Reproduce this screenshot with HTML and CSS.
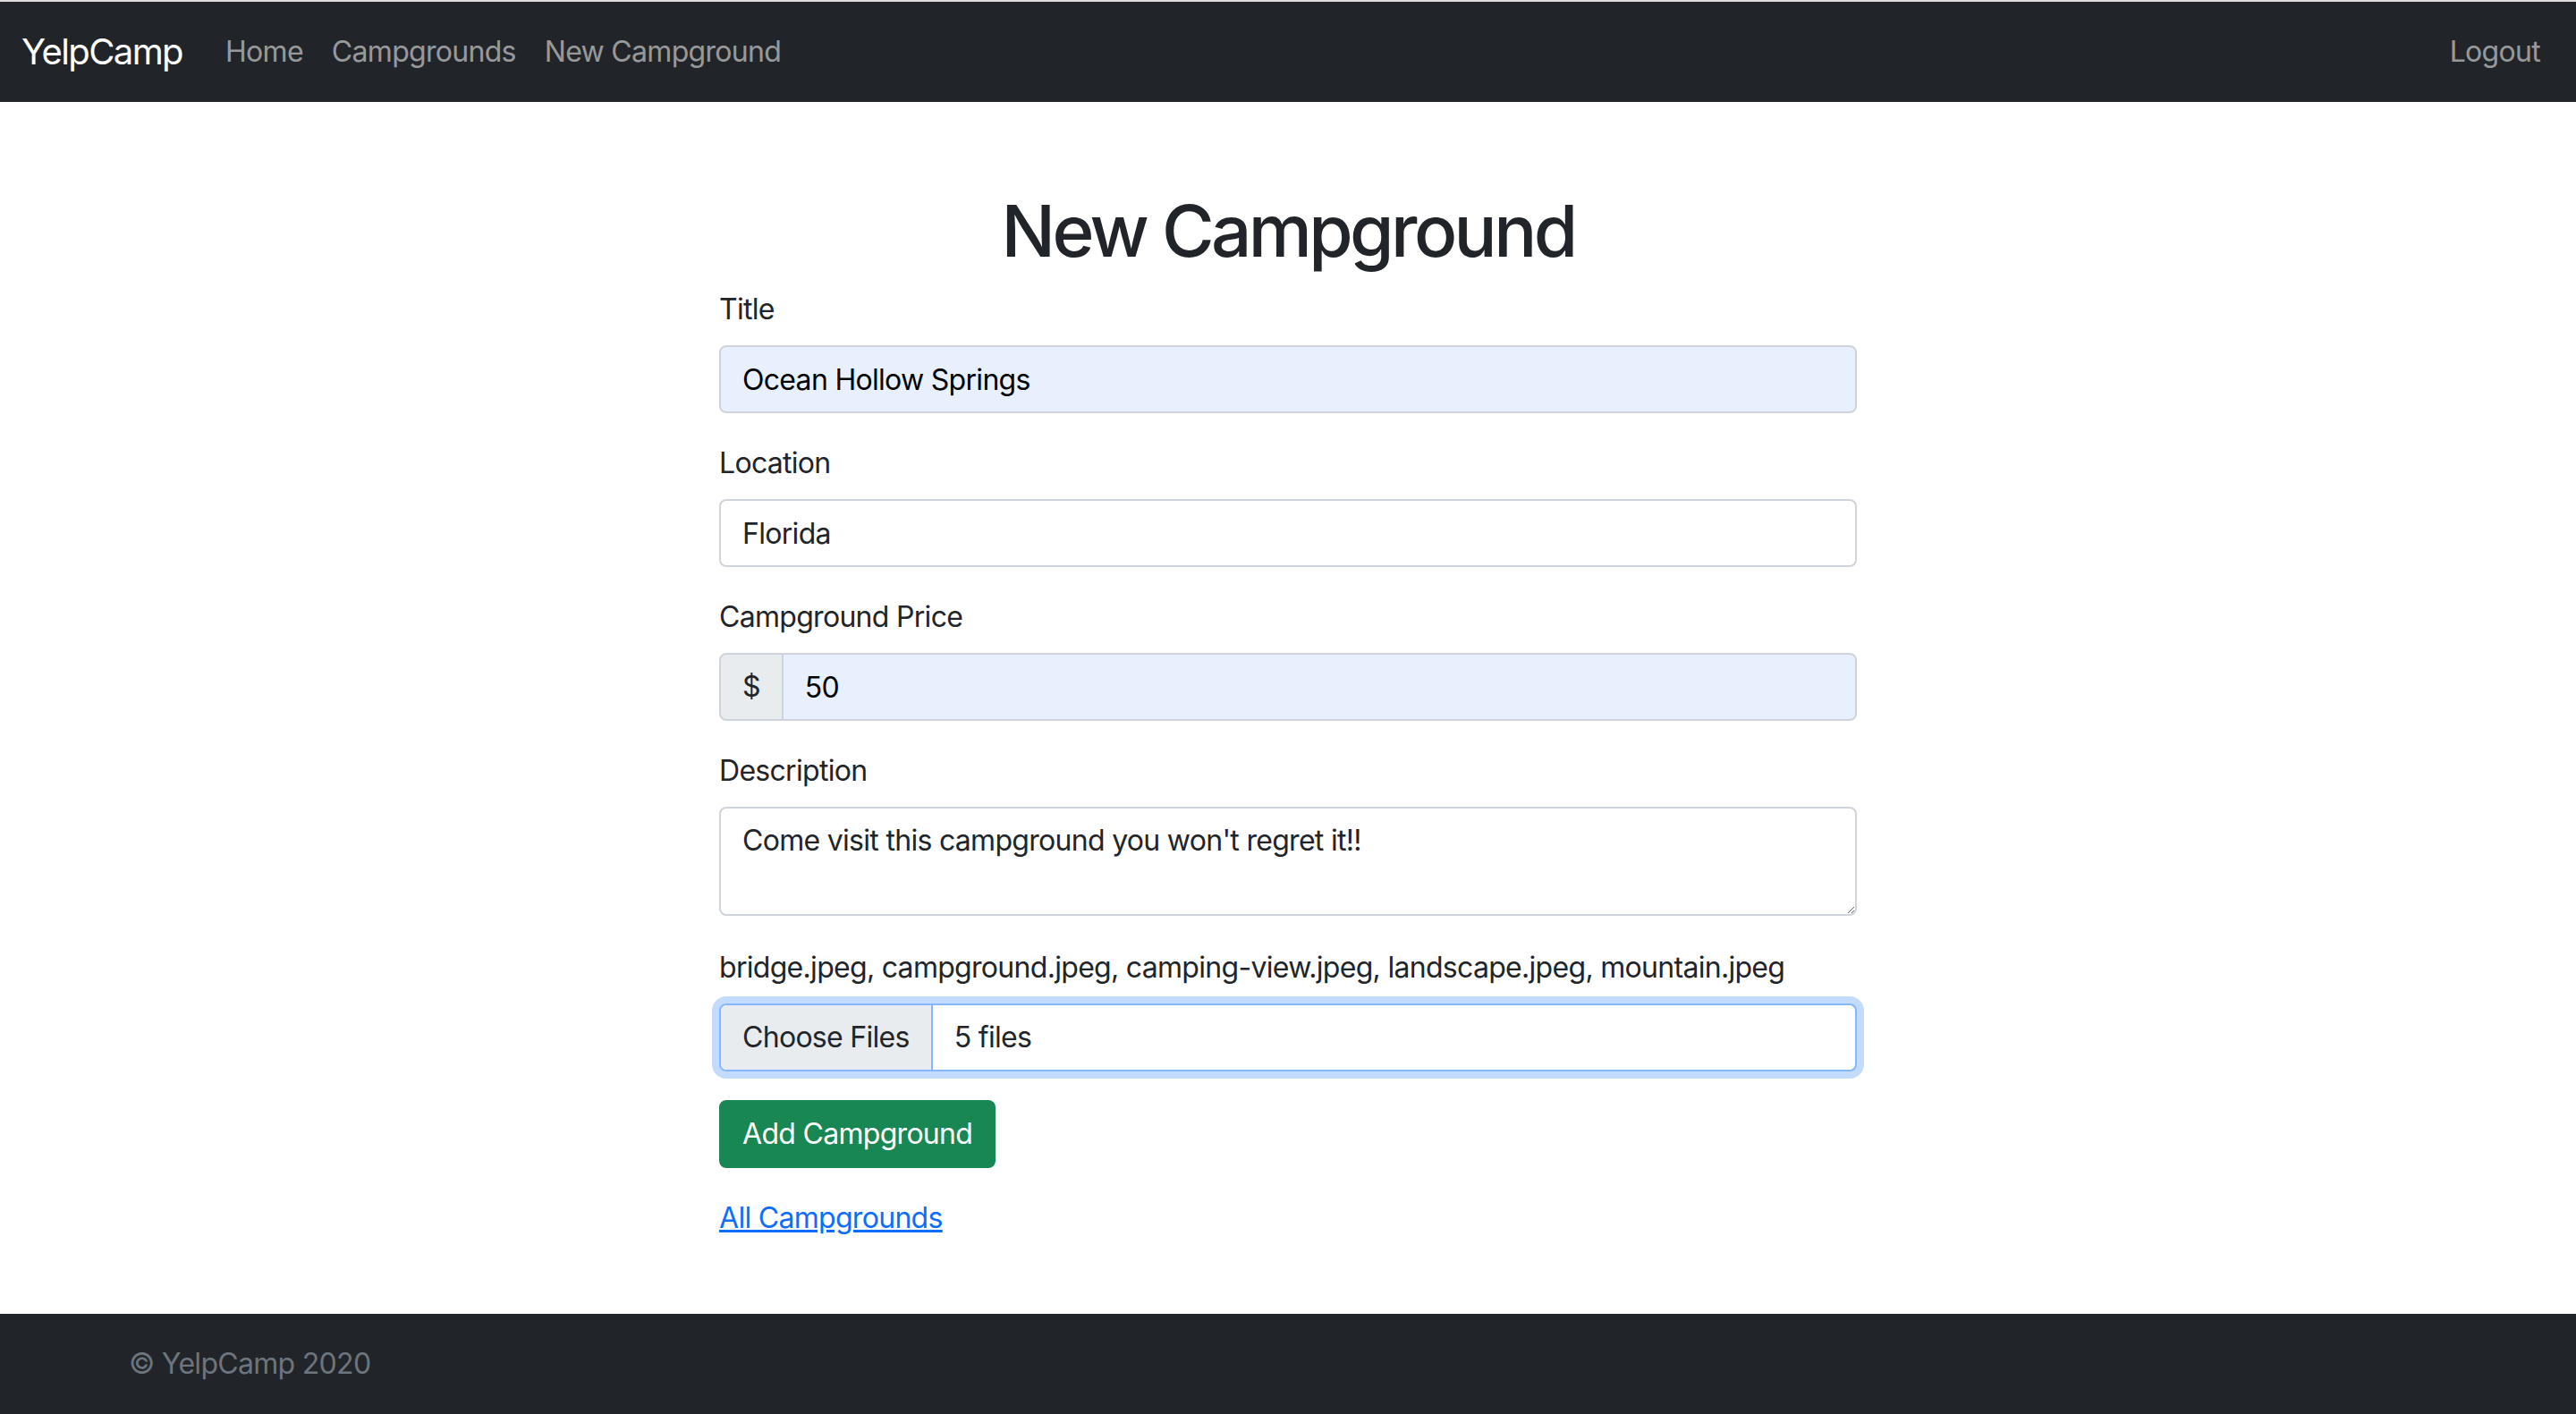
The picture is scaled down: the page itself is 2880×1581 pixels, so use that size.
FILE: index.html
```html
<!DOCTYPE html>
<html lang="en">
<head>
<meta charset="utf-8">
<title>YelpCamp</title>
<link rel="stylesheet" href="styles.css">
</head>
<body>
<div class="topline"></div>
<nav class="navbar">
  <a class="brand" href="#">YelpCamp</a>
  <ul class="nav-list">
    <li><a class="nav-link" href="#">Home</a></li>
    <li><a class="nav-link" href="#">Campgrounds</a></li>
    <li><a class="nav-link" href="#">New Campground</a></li>
  </ul>
  <ul class="nav-list nav-right">
    <li><a class="nav-link" href="#">Logout</a></li>
  </ul>
</nav>

<main class="main">
  <div class="form-col">
    <h1 class="page-title">New Campground</h1>
    <form class="form">
      <div class="group">
        <label class="form-label" for="title">Title</label>
        <input class="form-control autofill" id="title" type="text" value="Ocean Hollow Springs">
      </div>
      <div class="group">
        <label class="form-label" for="location">Location</label>
        <input class="form-control" id="location" type="text" value="Florida">
      </div>
      <div class="group">
        <label class="form-label" for="price">Campground Price</label>
        <div class="input-group">
          <span class="input-group-text">$</span>
          <input class="form-control autofill grouped" id="price" type="text" value="50">
        </div>
      </div>
      <div class="group group-textarea">
        <label class="form-label" for="description">Description</label>
        <textarea class="form-control textarea" id="description">Come visit this campground you won't regret it!!</textarea>
      </div>
      <div class="group">
        <label class="form-label" for="image">bridge.jpeg, campground.jpeg, camping-view.jpeg, landscape.jpeg, mountain.jpeg</label>
        <div class="file-control" id="image">
          <span class="file-button">Choose Files</span>
          <span class="file-name">5 files</span>
        </div>
      </div>
      <div class="group">
        <button class="btn-success" type="button">Add Campground</button>
      </div>
    </form>
    <a class="back-link" href="#">All Campgrounds</a>
  </div>
</main>

<footer class="footer">
  <div class="footer-container">
    <span class="muted">© YelpCamp 2020</span>
  </div>
</footer>
</body>
</html>
```

FILE: styles.css
```css
* { box-sizing: border-box; }

html, body { height: 100%; }

body {
  margin: 0;
  display: flex;
  flex-direction: column;
  min-height: 1581px;
  font-family: Inter, "Liberation Sans", sans-serif;
  font-size: 32px;
  line-height: 48px;
  letter-spacing: -0.7px;
  color: #212529;
  background: #fff;
}

.topline {
  height: 2px;
  background: #dcdcdc;
  flex: none;
}

.navbar {
  flex: none;
  display: flex;
  align-items: center;
  background: #212529;
  padding: 16px 24px;
  height: 112px;
}

.brand {
  color: #fff;
  text-decoration: none;
  font-size: 40px;
  line-height: 60px;
  letter-spacing: -0.04em;
  padding: 10px 0;
  margin-right: 32px;
}

.nav-list {
  list-style: none;
  margin: 0;
  padding: 0;
  display: flex;
}

.nav-right { margin-left: auto; }

.nav-link {
  display: block;
  padding: 16px 16px;
  color: rgba(255, 255, 255, 0.55);
  text-decoration: none;
  font-size: 32px;
  line-height: 48px;
}

.main {
  flex: none;
  margin-top: 96px;
}

.form-col {
  width: 1272px;
  margin: 0 auto;
}

.page-title {
  margin: 0 0 16px;
  font-size: 80px;
  line-height: 96px;
  font-weight: 500;
  letter-spacing: -0.045em;
  text-align: center;
}

.form { margin: 0; }

.group { margin-bottom: 32px; }
.group-textarea { margin-bottom: 34px; }

.form-label {
  display: inline-block;
  margin-bottom: 16px;
}

.form-control {
  display: block;
  width: 100%;
  padding: 12px 24px;
  font-family: inherit;
  font-size: 32px;
  line-height: 48px;
  letter-spacing: -0.7px;
  height: 76px;
  color: #212529;
  background: #fff;
  border: 2px solid #ced4da;
  border-radius: 8px;
  outline: none;
  margin: 0;
}

.autofill {
  background: #e8f0fe;
  color: #000;
}

.input-group {
  display: flex;
  align-items: stretch;
}

.input-group-text {
  display: flex;
  align-items: center;
  padding: 12px 24px;
  background: #e9ecef;
  border: 2px solid #ced4da;
  border-radius: 8px 0 0 8px;
  color: #212529;
}

.grouped {
  flex: 1 1 auto;
  width: 1%;
  margin-left: -2px;
  border-radius: 0 8px 8px 0;
}

.textarea {
  height: 122px;
  resize: vertical;
}

.file-control {
  display: flex;
  align-items: center;
  height: 76px;
  border: 2px solid #86b7fe;
  border-radius: 8px;
  box-shadow: 0 0 0 8px rgba(13, 110, 253, 0.25);
  overflow: hidden;
  background: #fff;
}

.file-button {
  height: 100%;
  display: flex;
  align-items: center;
  padding: 0 24px;
  background: #e9ecef;
  border-right: 2px solid #86b7fe;
  margin-right: 24px;
  color: #212529;
}

.file-name { color: #212529; }

.btn-success {
  display: inline-block;
  font-family: inherit;
  font-size: 32px;
  line-height: 48px;
  letter-spacing: -0.7px;
  padding: 12px 24px;
  color: #fff;
  background: #198754;
  border: 2px solid #198754;
  border-radius: 8px;
  cursor: pointer;
}

.back-link {
  color: #0d6efd;
  text-decoration: underline;
}

.footer {
  flex: none;
  margin-top: auto;
  padding: 32px 0;
  background: #212529;
}

.footer-container {
  padding: 0 144px;
}

.muted { color: #6c757d; }
```
